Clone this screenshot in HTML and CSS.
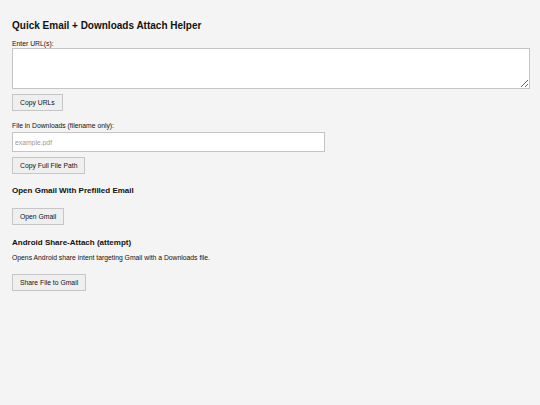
FILE: index.html
```html
<!DOCTYPE html>
<html lang="en">
<head>
<meta charset="utf-8">
<title>Quick Email + Downloads Attach Helper</title>
<link rel="stylesheet" href="styles.css">
</head>
<body>
<main class="app">
  <h1 class="title">Quick Email + Downloads Attach Helper</h1>

  <label class="field-label" for="urls">Enter URL(s):</label>
  <textarea id="urls" class="urls"></textarea>
  <button class="btn btn-first">Copy URLs</button>

  <label class="field-label field-label-spaced" for="file">File in Downloads (filename only):</label>
  <input id="file" class="file-input" type="text" placeholder="example.pdf">
  <button class="btn btn-first">Copy Full File Path</button>

  <h2 class="section-title">Open Gmail With Prefilled Email</h2>
  <button class="btn btn-after-title">Open Gmail</button>

  <h2 class="section-title">Android Share-Attach (attempt)</h2>
  <p class="note">Opens Android share intent targeting Gmail with a Downloads file.</p>
  <button class="btn btn-after-note">Share File to Gmail</button>
</main>
</body>
</html>
```

FILE: styles.css
```css
html, body {
  margin: 0;
  padding: 0;
  background: #f4f4f4;
}

body {
  font-family: "Liberation Sans", Arial, sans-serif;
  color: #111;
}

.app {
  display: flex;
  flex-direction: column;
  align-items: flex-start;
  padding: 19.5px 10px 12px 12px;
}

.title {
  margin: 0 0 8.5px;
  font-size: 10px;
  line-height: 12px;
  font-weight: bold;
}

.field-label {
  display: block;
  font-size: 6.8px;
  line-height: 8px;
}

.field-label-spaced {
  margin-top: 11px;
  margin-bottom: 2px;
}

.urls {
  box-sizing: border-box;
  display: block;
  width: 100%;
  height: 41px;
  margin: 0;
  padding: 2px;
  border: 1px solid #c4c4c4;
  border-radius: 0;
  background: #fff;
  font-family: "Liberation Sans", Arial, sans-serif;
  font-size: 6.8px;
}

.file-input {
  box-sizing: border-box;
  display: block;
  width: 313px;
  height: 20px;
  margin: 0;
  padding: 0 2px;
  border: 1px solid #c4c4c4;
  border-radius: 0;
  background: #fff;
  font-family: "Liberation Sans", Arial, sans-serif;
  font-size: 6.8px;
  color: #111;
}

.file-input::placeholder {
  color: #9a9a9a;
}

.btn {
  box-sizing: border-box;
  height: 17px;
  padding: 0 7px;
  border: 1px solid #c6c6c6;
  border-radius: 0;
  background: #efefef;
  color: #111;
  font-family: "Liberation Sans", Arial, sans-serif;
  font-size: 6.8px;
  line-height: 15px;
}

.btn-first {
  margin-top: 5px;
}

.btn-after-title {
  margin-top: 12px;
}

.btn-after-note {
  margin-top: 11.5px;
}

.section-title {
  margin: 12px 0 0;
  font-size: 8px;
  line-height: 10px;
  font-weight: bold;
}

.btn-after-title + .section-title {
  margin-top: 13px;
}

.note {
  margin: 6px 0 0;
  font-size: 6.8px;
  line-height: 8px;
}
```
